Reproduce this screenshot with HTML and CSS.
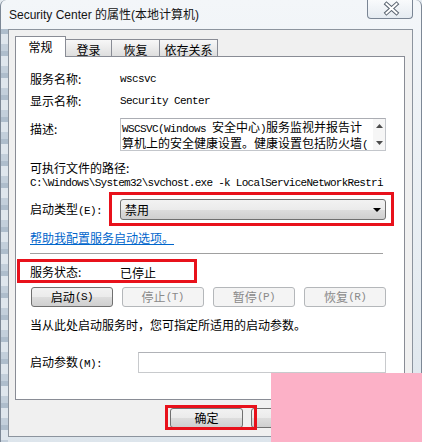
FILE: index.html
```html
<!DOCTYPE html>
<html lang="zh-CN">
<head>
<meta charset="utf-8">
<title>Security Center 的属性(本地计算机)</title>
<link rel="stylesheet" href="styles.css">
</head>
<body>
<div class="window">
  <div class="titlebar">
    <span class="title">Security Center 的属性(本地计算机)</span>
    <div class="close">
      <svg width="46" height="19" viewBox="0 0 46 19">
        <path d="M19.5 5 L29.5 14 M29.5 5 L19.5 14" stroke="#5a6470" stroke-width="4" stroke-linecap="square" fill="none"/>
        <path d="M19.5 5 L29.5 14 M29.5 5 L19.5 14" stroke="#ffffff" stroke-width="2" stroke-linecap="square" fill="none"/>
      </svg>
    </div>
  </div>
  <div class="client">
    <div class="tabs">
      <div class="tab sel">常规</div>
      <div class="tab t2">登录</div>
      <div class="tab t3">恢复</div>
      <div class="tab t4">依存关系</div>
    </div>
    <div class="panel">
      <div class="row r-name"><span class="lbl">服务名称:</span><span class="m">wscsvc</span></div>
      <div class="row r-disp"><span class="lbl">显示名称:</span><span class="m">Security Center</span></div>
      <div class="row r-desc">
        <span class="lbl">描述:</span>
        <div class="desc">
          <div class="desc-text">
            <div><span class="m">WSCSVC(Windows </span>安全中心<span class="m">)</span>服务监视并报告计</div>
            <div>算机上的安全健康设置。健康设置包括防火墙<span class="m">(</span></div>
          </div>
          <div class="scroll">
            <svg width="7" height="4" viewBox="0 0 7 4"><path d="M0 4 L3.5 0 L7 4 Z" fill="#4d4d4d"/></svg>
            <svg width="7" height="4" viewBox="0 0 7 4"><path d="M0 0 L7 0 L3.5 4 Z" fill="#4d4d4d"/></svg>
          </div>
        </div>
      </div>
      <div class="row r-pathlbl">可执行文件的路径:</div>
      <div class="path m">C:\Windows\System32\svchost.exe -k LocalServiceNetworkRestri</div>
      <div class="row r-type">
        <span class="lbl">启动类型<span class="m">(E):</span></span>
        <div class="combo">
          <span>禁用</span>
          <svg class="arrow" width="8" height="4" viewBox="0 0 8 4"><path d="M0 0 L8 0 L4 4 Z" fill="#000"/></svg>
        </div>
      </div>
      <div class="link">帮助我配置服务启动选项。</div>
      <div class="sep"></div>
      <div class="row r-status"><span class="lbl">服务状态:</span><span>已停止</span></div>
      <div class="btnrow">
        <div class="sbtn on">启动<span class="m">(S)</span></div>
        <div class="sbtn off">停止<span class="m">(T)</span></div>
        <div class="sbtn off w84">暂停<span class="m">(P)</span></div>
        <div class="sbtn off">恢复<span class="m">(R)</span></div>
      </div>
      <div class="hint">当从此处启动服务时，您可指定所适用的启动参数。</div>
      <div class="row r-param">
        <span class="lbl param-lbl">启动参数<span class="m">(M):</span></span>
        <div class="input"></div>
      </div>
    </div>
    <div class="footer">
      <div class="fbtn">确定</div>
      <div class="fbtn">取消</div>
      <div class="fbtn">应用<span class="m">(A)</span></div>
    </div>
  </div>
  <div class="mark mark-combo"></div>
  <div class="mark mark-status"></div>
  <div class="mark mark-ok"></div>
  <div class="pink"></div>
</div>
</body>
</html>
```
FILE: styles.css
```css
* { box-sizing: border-box; }
html, body { margin: 0; padding: 0; }
body {
  width: 422px;
  height: 442px;
  overflow: hidden;
  font-family: "Noto Sans CJK SC", sans-serif;
  font-size: 12px;
  color: #000;
  background: #e4eaf0;
}
.window {
  position: relative;
  width: 422px;
  height: 442px;
  display: flex;
  flex-direction: column;
  border-left: 1px solid #7d8896;
  border-right: 1px solid #7d8896;
  border-top-left-radius: 6px;
  border-top-right-radius: 6px;
  background:
    repeating-linear-gradient(180deg, #aebdcc 0 5px, #dfe6ed 5px 15px, #c3cfdb 15px 22px) 0 29px / 7px 413px no-repeat,
    linear-gradient(180deg, #f3f6f9 0%, #e7edf2 60%, #dde5ec 100%);
}
.titlebar {
  height: 29px;
  flex: none;
  display: flex;
  align-items: center;
  padding-left: 8px;
}
.title {
  font-family: "Liberation Sans", "Noto Sans CJK SC", sans-serif;
  font-size: 12px;
  color: #141414;
  line-height: 16px;
}
.close {
  align-self: flex-start;
  margin-left: auto;
  margin-right: 8px;
  width: 46px;
  height: 19px;
  border: 1px solid #7a8594;
  border-top: none;
  border-radius: 0 0 4px 4px;
  background: linear-gradient(180deg, rgba(255,255,255,0.5), rgba(220,228,236,0.6));
}
.close svg { display: block; margin: -1px 0 0 -1px; }
.client {
  margin-left: 7px;
  width: 405px;
  height: 408px;
  flex: none;
  border: 1px solid #8c949e;
  background: #f0f0f0;
  padding: 6px 7px 0 6px;
}
.tabs {
  height: 20px;
  display: flex;
  align-items: flex-end;
}
.tab {
  height: 17px;
  border: 1px solid #898c95;
  border-bottom: none;
  background: linear-gradient(180deg, #f7f7f7 0%, #ebebeb 50%, #dedede 100%);
  text-align: center;
  line-height: 15px;
  padding-top: 2px;
  margin-left: -1px;
}
.tab.sel {
  height: 21px;
  margin-bottom: -1px;
  margin-left: 0;
  background: #fff;
  position: relative;
  z-index: 1;
  width: 51px;
  line-height: 19px;
  padding-top: 0;
}
.t2 { width: 47px; }
.t3 { width: 49px; }
.t4 { width: 59px; }
.panel {
  height: 344px;
  background: #fff;
  border: 1px solid #898c95;
  padding: 14px 18px 0 14px;
}
.row { display: flex; align-items: center; }
.lbl { width: 90px; flex: none; line-height: 16px; white-space: nowrap; }
.m {
  font-family: "Liberation Mono", monospace;
  font-size: 11px;
  letter-spacing: -0.6px;
}
.r-name { height: 16px; }
.r-disp { height: 16px; margin-top: 6px; }
.r-desc { margin-top: 9px; align-items: flex-start; }
.r-desc .lbl { padding-top: 3px; }
.desc {
  width: 266px;
  height: 33px;
  border: 1px solid #c3c6cb;
  border-top-color: #abadb3;
  display: flex;
}
.desc-text {
  flex: 1;
  padding: 1px 0 0 1px;
  line-height: 13px;
  white-space: nowrap;
}
.scroll {
  width: 12px;
  flex: none;
  background: #f6f6f6;
  display: flex;
  flex-direction: column;
  justify-content: space-between;
  align-items: center;
  padding: 5px 0 5px;
}
.scroll svg { display: block; }
.r-pathlbl { margin-top: 9px; height: 16px; line-height: 16px; }
.path {
  height: 14px;
  line-height: 14px;
  white-space: nowrap;
  letter-spacing: -0.72px;
}
.r-type { margin-top: 9px; }
.combo {
  width: 266px;
  height: 21px;
  border: 1px solid #707070;
  border-radius: 3px;
  background: linear-gradient(180deg, #f2f2f2 0%, #ebebeb 50%, #dddddd 51%, #cfcfcf 100%);
  display: flex;
  align-items: center;
  padding-left: 4px;
  line-height: 16px;
}
.arrow { margin-left: auto; margin-right: 4px; display: block; }
.link {
  margin-top: 10px;
  line-height: 16px;
  color: #0066cc;
  text-decoration: underline;
}
.sep {
  margin-top: 7px;
  height: 1px;
  background: #a0a0a0;
  margin-right: 3px;
}
.r-status { margin-top: 10px; height: 16px; }
.btnrow {
  margin-top: 7px;
  display: flex;
  gap: 9px;
  padding-left: 1px;
}
.sbtn {
  width: 82px;
  height: 20px;
  border-radius: 3px;
  display: flex;
  align-items: center;
  justify-content: center;
  line-height: 16px;
}
.sbtn.w84 { width: 83px; }
.sbtn.on {
  border: 1px solid #707070;
  background: linear-gradient(180deg, #f2f2f2 0%, #ebebeb 50%, #dddddd 51%, #cfcfcf 100%);
}
.sbtn.off {
  border: 1px solid #b4b7ba;
  background: #f4f4f4;
  color: #8a8a8a;
}
.hint { margin-top: 10px; line-height: 16px; }
.r-param { margin-top: 19px; }
.param-lbl { width: 108px; }
.input {
  width: 248px;
  height: 21px;
  border: 1px solid #c8cacd;
  border-top-color: #b0b2b7;
  background: #fff;
}
.footer {
  margin-top: 8px;
  display: flex;
  justify-content: flex-end;
  gap: 8px;
}
.fbtn {
  width: 73px;
  height: 20px;
  border: 1px solid #707070;
  border-radius: 3px;
  background: linear-gradient(180deg, #f2f2f2 0%, #ebebeb 50%, #dddddd 51%, #cfcfcf 100%);
  display: flex;
  align-items: center;
  justify-content: center;
  line-height: 16px;
}
.mark {
  position: absolute;
  border: 3px solid #e8111b;
}
.mark-combo { left: 108px; top: 192px; width: 285px; height: 34px; }
.mark-status { left: 16px; top: 259px; width: 180px; height: 24px; }
.mark-ok { left: 164px; top: 405px; width: 92px; height: 25px; }
.pink {
  position: absolute;
  left: 270px;
  top: 373px;
  width: 152px;
  height: 69px;
  background: #fcb1c7;
}
```
